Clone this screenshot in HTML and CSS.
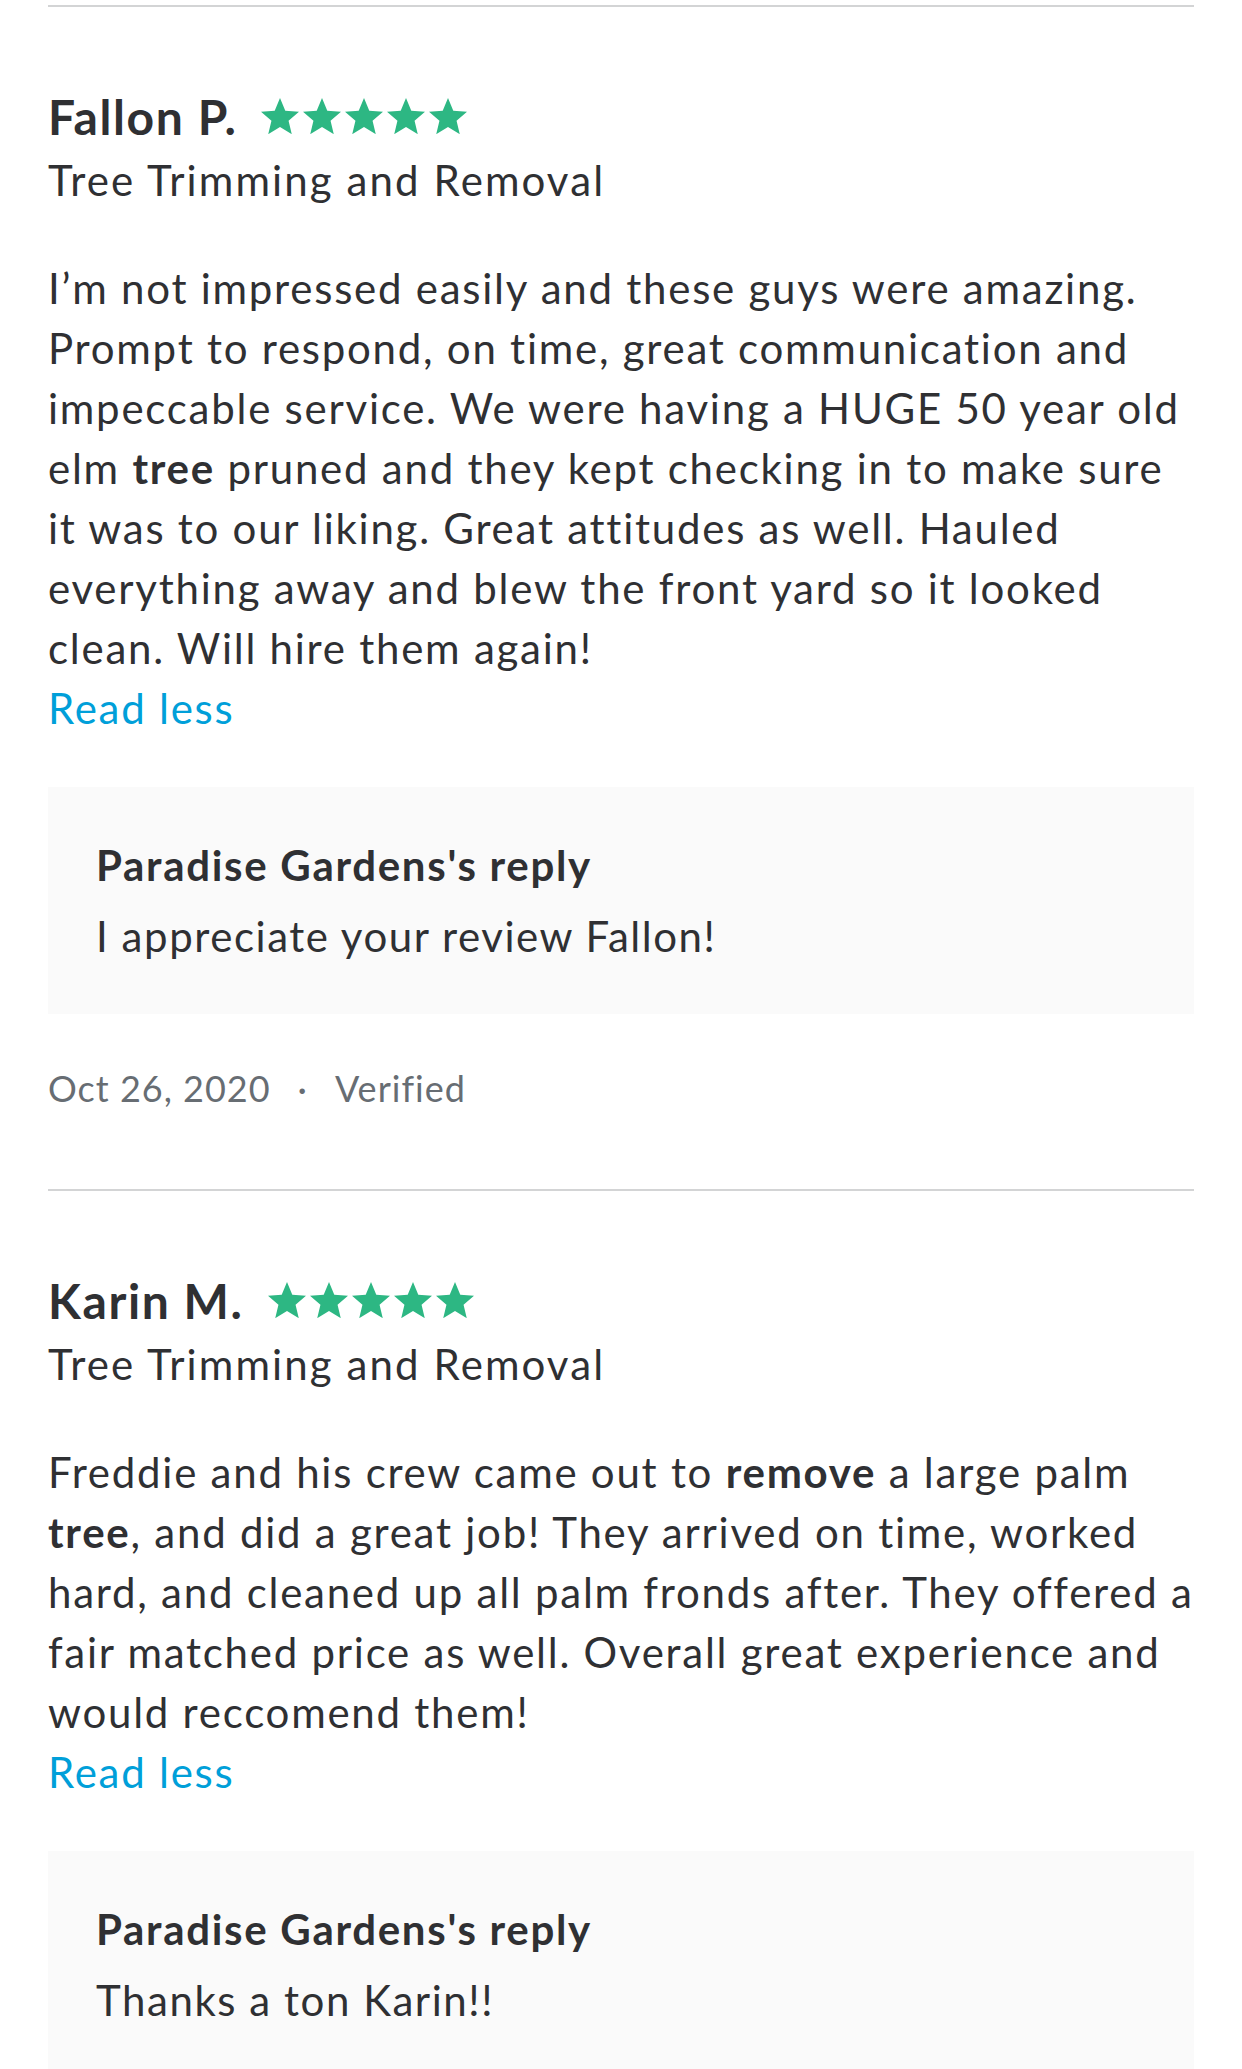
FILE: index.html
```html
<!DOCTYPE html>
<html lang="en">
<head>
<meta charset="utf-8">
<title>Reviews</title>
<link rel="stylesheet" href="styles.css">
</head>
<body>
<main class="reviews">
  <article class="review">
    <div class="review-head">
      <h3 class="reviewer">Fallon P.</h3>
      <div class="stars" aria-label="5 stars">
        <svg class="star" viewBox="0 0 38 36.2"><polygon points="19,0 24.29,12.72 38,13.82 27.56,22.78 30.76,36.18 19,29 7.24,36.18 10.44,22.78 0,13.82 13.71,12.72"/></svg>
        <svg class="star" viewBox="0 0 38 36.2"><polygon points="19,0 24.29,12.72 38,13.82 27.56,22.78 30.76,36.18 19,29 7.24,36.18 10.44,22.78 0,13.82 13.71,12.72"/></svg>
        <svg class="star" viewBox="0 0 38 36.2"><polygon points="19,0 24.29,12.72 38,13.82 27.56,22.78 30.76,36.18 19,29 7.24,36.18 10.44,22.78 0,13.82 13.71,12.72"/></svg>
        <svg class="star" viewBox="0 0 38 36.2"><polygon points="19,0 24.29,12.72 38,13.82 27.56,22.78 30.76,36.18 19,29 7.24,36.18 10.44,22.78 0,13.82 13.71,12.72"/></svg>
        <svg class="star" viewBox="0 0 38 36.2"><polygon points="19,0 24.29,12.72 38,13.82 27.56,22.78 30.76,36.18 19,29 7.24,36.18 10.44,22.78 0,13.82 13.71,12.72"/></svg>
      </div>
    </div>
    <div class="service">Tree Trimming and Removal</div>
    <p class="review-text">I’m not impressed easily and these guys were amazing.<br>Prompt to respond, on time, great communication and<br>impeccable service. We were having a HUGE 50 year old<br>elm <b>tree</b> pruned and they kept checking in to make sure<br>it was to our liking. Great attitudes as well. Hauled<br>everything away and blew the front yard so it looked<br>clean. Will hire them again!</p>
    <a class="read-less" href="#">Read less</a>
    <div class="reply">
      <div class="reply-title">Paradise Gardens's reply</div>
      <p class="reply-text">I appreciate your review Fallon!</p>
    </div>
    <div class="meta"><span>Oct 26, 2020</span><span class="sep">·</span><span>Verified</span></div>
  </article>

  <article class="review">
    <div class="review-head">
      <h3 class="reviewer">Karin M.</h3>
      <div class="stars" aria-label="5 stars">
        <svg class="star" viewBox="0 0 38 36.2"><polygon points="19,0 24.29,12.72 38,13.82 27.56,22.78 30.76,36.18 19,29 7.24,36.18 10.44,22.78 0,13.82 13.71,12.72"/></svg>
        <svg class="star" viewBox="0 0 38 36.2"><polygon points="19,0 24.29,12.72 38,13.82 27.56,22.78 30.76,36.18 19,29 7.24,36.18 10.44,22.78 0,13.82 13.71,12.72"/></svg>
        <svg class="star" viewBox="0 0 38 36.2"><polygon points="19,0 24.29,12.72 38,13.82 27.56,22.78 30.76,36.18 19,29 7.24,36.18 10.44,22.78 0,13.82 13.71,12.72"/></svg>
        <svg class="star" viewBox="0 0 38 36.2"><polygon points="19,0 24.29,12.72 38,13.82 27.56,22.78 30.76,36.18 19,29 7.24,36.18 10.44,22.78 0,13.82 13.71,12.72"/></svg>
        <svg class="star" viewBox="0 0 38 36.2"><polygon points="19,0 24.29,12.72 38,13.82 27.56,22.78 30.76,36.18 19,29 7.24,36.18 10.44,22.78 0,13.82 13.71,12.72"/></svg>
      </div>
    </div>
    <div class="service">Tree Trimming and Removal</div>
    <p class="review-text">Freddie and his crew came out to <b>remove</b> a large palm<br><b>tree</b>, and did a great job! They arrived on time, worked<br>hard, and cleaned up all palm fronds after. They offered a<br>fair matched price as well. Overall great experience and<br>would reccomend them!</p>
    <a class="read-less" href="#">Read less</a>
    <div class="reply">
      <div class="reply-title">Paradise Gardens's reply</div>
      <p class="reply-text">Thanks a ton Karin!!</p>
    </div>
  </article>
</main>
</body>
</html>
```
FILE: styles.css
```css
html, body {
  margin: 0;
  padding: 0;
  background: #ffffff;
}
body {
  font-family: "Lato", "Open Sans", sans-serif;
  color: #2f3033;
  font-size: 42px;
  letter-spacing: 1.75px;
  overflow: hidden;
}
.reviews {
  padding: 5px 48px 0;
}
.review {
  border-top: 2px solid #d3d4d5;
  padding-top: 77px;
}
.review-head {
  display: flex;
  align-items: center;
}
.reviewer {
  margin: 0;
  font-size: 48px;
  font-weight: 700;
  line-height: 66px;
  letter-spacing: 1.6px;
}
.stars {
  display: flex;
  gap: 4px;
  margin-left: 24px;
  margin-bottom: 2px;
}
.star {
  display: block;
  width: 38px;
  height: 36.2px;
  fill: #2db783;
}
.service {
  line-height: 60px;
  letter-spacing: 2.1px;
}
.review-text {
  margin: 48px 0 0;
  line-height: 60px;
  white-space: nowrap;
}
.review-text b {
  font-weight: 700;
}
.read-less {
  display: block;
  line-height: 60px;
  color: #009fd9;
  text-decoration: none;
}
.reply {
  margin-top: 49px;
  background: #fafafa;
  padding: 48px;
}
.reply-title {
  font-weight: 700;
  line-height: 60px;
  letter-spacing: 1.7px;
}
.reply-text {
  margin: 11px 0 0;
  line-height: 60px;
  letter-spacing: 1.55px;
}
.meta {
  margin-top: 50px;
  padding-bottom: 77px;
  font-size: 36px;
  line-height: 48px;
  letter-spacing: 1px;
  color: #676d73;
  display: flex;
  align-items: center;
}
.sep {
  margin: 0 27px;
}
```
